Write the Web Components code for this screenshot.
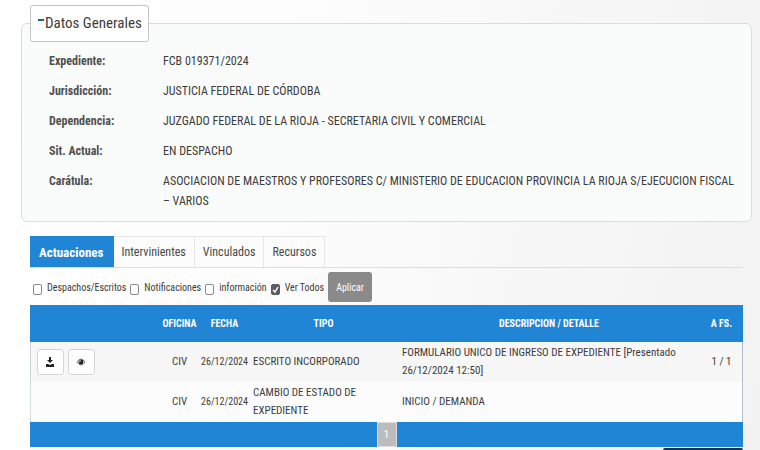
<!DOCTYPE html>
<html lang="es">
<head>
<meta charset="utf-8">
<title>Datos Generales</title>
<style>
    html {
    min-height: 100%;
    background: linear-gradient(100deg, #ffffff 0%, #fcfcfc 40%, #f2f2f2 100%);}

    body {
    margin: 0;
    padding: 5px 8px 0 21px;
    color: #3c3c3c;
    font-family: "Roboto Condensed", "Liberation Sans", sans-serif;
    font-size: 12px;}
</style>
</head>
<body>
<datos-generales heading="Datos Generales">
    <dato-item label="Expediente:">FCB 019371/2024</dato-item>
    <dato-item label="Jurisdicción:">JUSTICIA FEDERAL DE CÓRDOBA</dato-item>
    <dato-item label="Dependencia:">JUZGADO FEDERAL DE LA RIOJA - SECRETARIA CIVIL Y COMERCIAL</dato-item>
    <dato-item label="Sit. Actual:">EN DESPACHO</dato-item>
    <dato-item label="Carátula:">ASOCIACION DE MAESTROS Y PROFESORES C/ MINISTERIO DE EDUCACION PROVINCIA LA RIOJA S/EJECUCION FISCAL – VARIOS</dato-item>
</datos-generales>
<expediente-panel>
    <expediente-tabs></expediente-tabs>
    <actuaciones-filter></actuaciones-filter>
    <actuaciones-table></actuaciones-table>
</expediente-panel>

<script>
class DatosGenerales extends HTMLElement {
    constructor(){
        super();
        this.attachShadow({mode: "open"});
    }

    connectedCallback(){
        this.shadowRoot.innerHTML = `
            <style>
                :host {
                display: block;}

                .datos {
                min-width: 0;
                margin: 0;
                padding: 9px 10px 10px 8px;
                border: 1px solid #dcdcdc;
                border-radius: 6px;
                background: #fafbfb;}

                .datos__legend {
                padding: 0;}

                .datos__toggle {
                display: flex;
                align-items: center;
                gap: 1px;
                height: 37px;
                padding: 0 6px 2px 7px;
                border: 1px solid #c4c4c4;
                border-radius: 3px;
                background: #ffffff;
                color: #3c3c3c;
                font-family: inherit;
                font-size: 15px;
                cursor: pointer;}

                .datos__minus {
                width: 6px;
                height: 2px;
                margin-bottom: 6px;
                background: #1f6380;}

                .datos__list {
                display: flex;
                flex-direction: column;
                gap: 10px;
                padding-left: 19px;}
            </style>
            <fieldset class="datos">
                <legend class="datos__legend">
                    <button class="datos__toggle" type="button"><span class="datos__minus"></span>${this.getAttribute("heading")}</button>
                </legend>
                <div class="datos__list"><slot></slot></div>
            </fieldset>
        `;
    }
}

class DatoItem extends HTMLElement {
    constructor(){
        super();
        this.attachShadow({mode: "open"});
    }

    connectedCallback(){
        this.shadowRoot.innerHTML = `
            <style>
                :host {
                display: block;
                line-height: 20px;}

                .dato {
                display: grid;
                grid-template-columns: 114px 1fr;
                margin: 0;}

                dt {
                color: #505050;
                font-weight: bold;}

                dd {
                margin: 0;}
            </style>
            <dl class="dato">
                <dt>${this.getAttribute("label")}</dt>
                <dd><slot></slot></dd>
            </dl>
        `;
    }
}

class ExpedientePanel extends HTMLElement {
    constructor(){
        super();
        this.attachShadow({mode: "open"});
    }

    connectedCallback(){
        this.shadowRoot.innerHTML = `
            <style>
                :host {
                display: block;
                padding: 14px 9px 0;}

                .panel__bar {
                width: 80px;
                height: 2px;
                margin: 1px 0 0 auto;
                border-radius: 3px 3px 0 0;
                background: #16334d;}
            </style>
            <slot></slot>
            <div class="panel__bar"></div>
        `;
    }
}

class ExpedienteTabs extends HTMLElement {
    constructor(){
        super();
        this.attachShadow({mode: "open"});
        this.tabs = ["Actuaciones", "Intervinientes", "Vinculados", "Recursos"];
    }

    connectedCallback(){
        this.shadowRoot.innerHTML = `
            <style>
                :host {
                display: block;}

                .tabs {
                display: flex;
                border-bottom: 1px solid #dedede;}

                .tabs__tab {
                height: 31px;
                padding: 0 8px;
                border: 0 solid #e6e6e6;
                border-width: 1px 1px 0 0;
                background: #fcfcfc;
                color: #484848;
                font-family: inherit;
                font-size: 12px;
                cursor: pointer;}

                .tabs__tab[aria-selected="true"] {
                padding: 0 9px;
                border-color: #2185d5;
                background: #2185d5;
                color: #ffffff;
                font-size: 13px;
                font-weight: bold;}
            </style>
            <div class="tabs" role="tablist">
                ${this.tabs.map((tab, i) => `<button class="tabs__tab" type="button" role="tab" aria-selected="${i === 0}">${tab}</button>`).join("")}
            </div>
        `;
    }
}

class ActuacionesFilter extends HTMLElement {
    constructor(){
        super();
        this.attachShadow({mode: "open"});
        this.options = [
            {id: "despachos", label: "Despachos/Escritos"},
            {id: "notificaciones", label: "Notificaciones"},
            {id: "informacion", label: "información"},
            {id: "todos", label: "Ver Todos", checked: true}
        ];
    }

    connectedCallback(){
        this.shadowRoot.innerHTML = `
            <style>
                :host {
                display: block;
                font-size: 10px;}

                .filter {
                display: flex;
                align-items: center;
                gap: 4px;
                padding: 4px 3px 3px;}

                .filter__option {
                display: flex;
                align-items: center;
                gap: 5px;}

                input {
                appearance: none;
                box-sizing: border-box;
                width: 9px;
                height: 11px;
                margin: 4px 0 0;
                border: 1px solid #8a8a8a;
                border-radius: 2px;
                background: #ffffff;}

                input:checked {
                border-color: #5c5c5c;
                background: #5c5c5c url("data:image/svg+xml,%3Csvg xmlns='http://www.w3.org/2000/svg' viewBox='0 0 7 9'%3E%3Cpath d='M1 5l2 2 3-5' fill='none' stroke='white' stroke-width='1.4'/%3E%3C/svg%3E") center no-repeat;}

                button {
                height: 30px;
                padding: 0 8px;
                border: 0;
                border-radius: 3px;
                background: #8a8a8a;
                color: #ffffff;
                font: inherit;
                cursor: pointer;}
            </style>
            <form class="filter">
                ${this.options.map(o => `
                    <div class="filter__option">
                        <input type="checkbox" id="${o.id}" ${o.checked ? "checked" : ""}>
                        <label for="${o.id}">${o.label}</label>
                    </div>`).join("")}
                <button type="button">Aplicar</button>
            </form>
        `;
    }
}

class IconButton extends HTMLElement {
    constructor(){
        super();
        this.attachShadow({mode: "open"});
    }

    connectedCallback(){
        const icons = {
            download: `<path d="M5 1h2v3h2L6 7 3 4h2z"/><path d="M2 8h2l2 1 2-1h2v3H2z"/>`,
            eye: `<path d="M2 6q4-6 8 0q-4 6-8 0z" fill="none" stroke="#777777"/><circle cx="6" cy="6" r="2.4"/><circle cx="5" cy="5" r="0.8" fill="#ffffff"/>`
        };
        this.shadowRoot.innerHTML = `
            <style>
                :host {
                display: block;}

                button {
                display: flex;
                align-items: center;
                justify-content: center;
                width: 27px;
                height: 26px;
                padding: 0 2px 0 0;
                border: 1px solid #d6d6d6;
                border-radius: 3px;
                background: #ffffff;
                cursor: pointer;}

                svg {
                width: 12px;
                height: 12px;
                fill: #222222;}
            </style>
            <button type="button"><svg viewBox="0 0 12 12">${icons[this.getAttribute("icon")]}</svg></button>
        `;
    }
}

class ActuacionesTable extends HTMLElement {
    constructor(){
        super();
        this.attachShadow({mode: "open"});
        this.rows = [
            {actions: true, oficina: "CIV", fecha: "26/12/2024", tipo: "ESCRITO INCORPORADO", detalle: "FORMULARIO UNICO DE INGRESO DE EXPEDIENTE [Presentado 26/12/2024 12:50]", fs: "1 / 1"},
            {actions: false, oficina: "CIV", fecha: "26/12/2024", tipo: "CAMBIO DE ESTADO DE EXPEDIENTE", detalle: "INICIO / DEMANDA", fs: ""}
        ];
    }

    renderRow(row){
        const actions = `<icon-button icon="download"></icon-button><icon-button icon="eye"></icon-button>`;
        return `
            <tr>
                <td><div class="actions">${row.actions ? actions : ""}</div></td>
                <td class="center">${row.oficina}</td>
                <td class="center fecha">${row.fecha}</td>
                <td>${row.tipo}</td>
                <td>${row.detalle}</td>
                <td class="center">${row.fs}</td>
            </tr>`;
    }

    connectedCallback(){
        this.shadowRoot.innerHTML = `
            <style>
                :host {
                display: block;
                font-size: 11px;
                line-height: 18px;}

                table {
                width: 100%;
                border-spacing: 0;
                table-layout: fixed;
                background: #fcfcfc;
                box-shadow: inset 1px 0 #d4dbe0, inset -1px 0 #b4c4d0;}

                th {
                height: 37px;
                padding: 0;
                background: #2185d5;
                color: #ffffff;
                font-size: 10px;}

                td {
                height: 36px;
                padding: 2px 4px;}

                tbody tr:first-child td {
                background: rgba(0, 0, 0, 0.02);}

                .center {
                padding: 2px 0;
                text-align: center;}

                .fecha {
                font-size: 10px;}

                .actions {
                display: flex;
                gap: 4px;
                padding-left: 3px;}

                .col-actions {
                width: 129px;}

                .col-oficina {
                width: 41px;}

                .col-fecha {
                width: 49px;}

                .col-tipo {
                width: 149px;}

                .col-fs {
                width: 43px;}

                .pager {
                display: flex;
                justify-content: center;
                height: 25px;
                background: #2185d5;}

                .pager a {
                width: 18px;
                border: 1px solid #dddddd;
                background: #bcbcbc;
                color: #ffffff;
                line-height: 24px;
                text-align: center;
                text-decoration: none;}
            </style>
            <table>
                <thead>
                    <tr>
                        <th class="col-actions"></th>
                        <th class="col-oficina">OFICINA</th>
                        <th class="col-fecha">FECHA</th>
                        <th class="col-tipo">TIPO</th>
                        <th>DESCRIPCION / DETALLE</th>
                        <th class="col-fs">A FS.</th>
                    </tr>
                </thead>
                <tbody>${this.rows.map(row => this.renderRow(row)).join("")}</tbody>
            </table>
            <nav class="pager"><a href="#">1</a></nav>
        `;
    }
}

customElements.define('datos-generales', DatosGenerales);
customElements.define('dato-item', DatoItem);
customElements.define('expediente-panel', ExpedientePanel);
customElements.define('expediente-tabs', ExpedienteTabs);
customElements.define('actuaciones-filter', ActuacionesFilter);
customElements.define('icon-button', IconButton);
customElements.define('actuaciones-table', ActuacionesTable);
</script>
</body>
</html>
